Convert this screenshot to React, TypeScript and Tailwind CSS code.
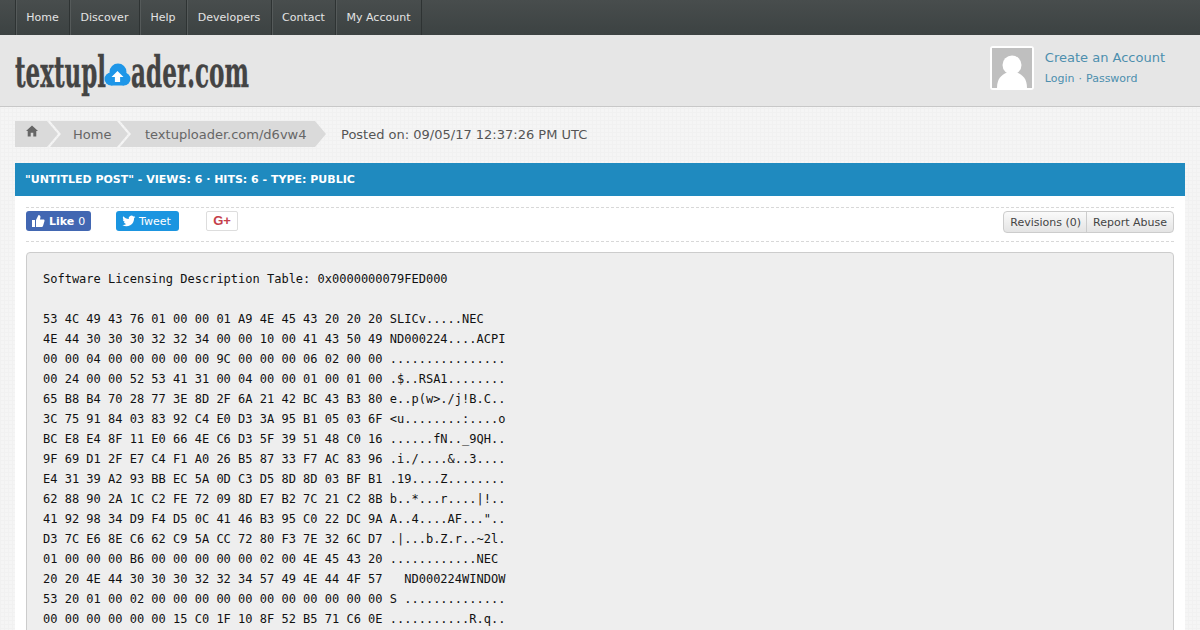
import React from "react";

const nav = [
  ["Home", "w-[54px]"],
  ["Discover", "w-[70px]"],
  ["Help", "w-[47px]"],
  ["Developers", "w-[85px]"],
  ["Contact", "w-[64px]"],
  ["My Account", "w-[86px]"],
];

const lines = [
  "Software Licensing Description Table: 0x0000000079FED000",
  "",
  "53 4C 49 43 76 01 00 00 01 A9 4E 45 43 20 20 20 SLICv.....NEC",
  "4E 44 30 30 30 32 32 34 00 00 10 00 41 43 50 49 ND000224....ACPI",
  "00 00 04 00 00 00 00 00 9C 00 00 00 06 02 00 00 ................",
  "00 24 00 00 52 53 41 31 00 04 00 00 01 00 01 00 .$..RSA1........",
  "65 B8 B4 70 28 77 3E 8D 2F 6A 21 42 BC 43 B3 80 e..p(w>./j!B.C..",
  "3C 75 91 84 03 83 92 C4 E0 D3 3A 95 B1 05 03 6F <u........:....o",
  "BC E8 E4 8F 11 E0 66 4E C6 D3 5F 39 51 48 C0 16 ......fN.._9QH..",
  "9F 69 D1 2F E7 C4 F1 A0 26 B5 87 33 F7 AC 83 96 .i./....&..3....",
  "E4 31 39 A2 93 BB EC 5A 0D C3 D5 8D 8D 03 BF B1 .19....Z........",
  "62 88 90 2A 1C C2 FE 72 09 8D E7 B2 7C 21 C2 8B b..*...r....|!..",
  "41 92 98 34 D9 F4 D5 0C 41 46 B3 95 C0 22 DC 9A A..4....AF...\"..",
  "D3 7C E6 8E C6 62 C9 5A CC 72 80 F3 7E 32 6C D7 .|...b.Z.r..~2l.",
  "01 00 00 00 B6 00 00 00 00 00 02 00 4E 45 43 20 ............NEC",
  "20 20 4E 44 30 30 30 32 32 34 57 49 4E 44 4F 57   ND000224WINDOW",
  "53 20 01 00 02 00 00 00 00 00 00 00 00 00 00 00 S ..............",
  "00 00 00 00 00 00 15 C0 1F 10 8F 52 B5 71 C6 0E ...........R.q..",
];

function Logo() {
  return (
    <svg width="240" height="52" viewBox="0 0 240 52" className="block">
      <text x="0" y="36" textLength="91" lengthAdjust="spacingAndGlyphs" fontFamily="'DejaVu Serif', serif" fontWeight="700" fontSize="42" fill="#444444" stroke="#444444" strokeWidth="0.4">textupl</text>
      <g fill="#1e96e8">
        <circle cx="103" cy="21" r="8.500" />
        <circle cx="96" cy="28" r="6.500" />
        <circle cx="109" cy="28" r="6.500" />
        <rect x="96" y="24" width="13" height="10.500" />
      </g>
      <path d="M102.500 20l6 6h-3.400v5h-5.200v-5h-3.400z" fill="#ffffff" />
      <text x="116" y="36" textLength="118" lengthAdjust="spacingAndGlyphs" fontFamily="'DejaVu Serif', serif" fontWeight="700" fontSize="42" fill="#444444" stroke="#444444" strokeWidth="0.4">ader.com</text>
    </svg>
  );
}

function Avatar() {
  return (
    <div className="w-[44px] h-[44px] bg-white rounded-[3px] p-[2px]">
      <svg viewBox="0 0 40 40" className="w-full h-full block bg-[#bfbfbf]">
        <circle cx="20" cy="17" r="9.500" fill="#fff" />
        <path d="M5 40c0-9 4-13 10-15.500h10c6 2.500 10 6.500 10 15.500z" fill="#fff" />
      </svg>
    </div>
  );
}

export default function App() {
  return (
    <div className="h-[630px] overflow-hidden bg-[#f5f5f5] bg-[linear-gradient(#f1f1f1_1px,transparent_1px),linear-gradient(90deg,#f1f1f1_1px,transparent_1px)] bg-[size:4px_4px] font-['DejaVu_Sans',sans-serif]">
      <nav className="h-[35px] bg-[linear-gradient(#484d4d,#3c4242)] px-[15px] flex">
        <div className="flex border-l border-[#2e3333]">
          {nav.map(([t, w]) => (
            <a key={t} className={`${w} h-[35px] pt-[2px] flex items-center justify-center text-[11px] text-[#e4e4e4] border-r border-[#2e3333] shadow-[inset_1px_0_0_#555a5a]`}>
              {t}
            </a>
          ))}
        </div>
      </nav>

      <header className="h-[72px] bg-[#e6e6e6] border-b border-[#c8c8c8] pl-[15px] pr-[35px] pt-[11px] flex items-start justify-between">
        <div className="mt-[5px]"><Logo /></div>
        <div className="flex items-start gap-[11px]">
          <Avatar />
          <div className="text-[#4d8fae] pt-[3px]">
            <div className="text-[13px] leading-[18px] mb-[4px]">Create an Account</div>
            <div className="text-[11px] leading-[16px] flex gap-[4px]"><span>Login</span><span>·</span><span>Password</span></div>
          </div>
        </div>
      </header>

      <div className="px-[15px] pt-[14px] flex items-start h-[56px]">
        <div className="flex h-[26px] text-[13px] text-[#666666] leading-[28px]">
          <div className="w-[43px] h-[26px] bg-[#dadada] [clip-path:polygon(0_0,32px_0,43px_50%,32px_100%,0_100%)] pl-[11px] pt-[4px]">
            <svg viewBox="0 0 14 13" className="w-[12px] h-[12px] block" fill="#666666">
              <path d="M7 0l7 6.500h-2v6.500H8.500V8.500h-3V13H2V6.500H0z" />
            </svg>
          </div>
          <div className="-ml-[8px] w-[78px] h-[26px] bg-[#dadada] [clip-path:polygon(0_0,67px_0,78px_50%,67px_100%,0_100%,11px_50%)] pl-[23px]">Home</div>
          <div className="-ml-[8px] w-[206px] h-[26px] bg-[#dadada] [clip-path:polygon(0_0,195px_0,206px_50%,195px_100%,0_100%,11px_50%)] pl-[25px]">textuploader.com/d6vw4</div>
        </div>
        <div className="ml-[15px] text-[13px] leading-[28px] text-[#555555]">Posted on: 09/05/17 12:37:26 PM UTC</div>
      </div>

      <section className="mx-[15px] bg-white">
        <div className="h-[33px] bg-[#1f8abf] px-[10px] pt-[2px] text-[11px] font-bold text-white flex items-center">
          "UNTITLED POST" - VIEWS: 6 · HITS: 6 - TYPE: PUBLIC
        </div>
        <div className="px-[11px] pt-[11px]">
          <div className="h-[35px] border-y border-dashed border-[#d8d8d8] flex items-start justify-between pt-[3px]">
            <div className="flex items-center">
              <div className="w-[65px] h-[20px] rounded-[3px] bg-[#4267b2] text-white text-[11px] flex items-center pl-[5px] gap-[4px]">
                <svg viewBox="0 0 14 14" className="w-[14px] h-[14px]" fill="#fff"><path d="M1 6h3v7H1zM5 6l2.500-5c1.200 0 2 .8 2 2l-.5 2.500h3.500c.8 0 1.200.7 1 1.400L12 12c-.2.600-.7 1-1.300 1H5z"/></svg>
                <span className="font-bold pt-[2px]">Like</span><span className="font-normal pt-[2px]">0</span>
              </div>
              <div className="ml-[25px] w-[63px] h-[20px] rounded-[3px] bg-[#1b95e0] text-white text-[11px] flex items-center pl-[6px] gap-[3px]">
                <svg viewBox="0 0 24 24" className="w-[14px] h-[14px]" fill="#fff"><path d="M23 5c-.8.400-1.700.600-2.600.700.900-.600 1.600-1.400 2-2.500-.9.500-1.900.900-2.900 1.100A4.600 4.600 0 0 0 11.600 8.500C7.800 8.300 4.400 6.500 2.100 3.700c-1.200 2.100-.6 4.800 1.400 6.100-.7 0-1.400-.2-2-.6 0 2.200 1.500 4.100 3.700 4.600-.7.200-1.400.2-2.100.1.600 1.800 2.300 3.100 4.300 3.200A9.300 9.300 0 0 1 .6 19a13.100 13.100 0 0 0 20.100-11.600c1-.700 1.700-1.500 2.300-2.400z"/></svg>
                <span className="pt-[2px]">Tweet</span>
              </div>
              <div className="ml-[27px] w-[32px] h-[20px] rounded-[2px] bg-white border border-[#dddddd] text-[#c5404a] text-[13px] font-bold font-['Liberation_Sans',sans-serif] flex items-center justify-center">G+</div>
            </div>
            <div className="flex h-[22px] border border-[#cccccc] rounded-[4px] bg-[linear-gradient(#fafafa,#e4e4e4)] text-[11px] text-[#444444] items-center">
              <span className="pl-[6px] pr-[5px] pt-[2px] border-r border-[#cccccc] h-full flex items-center">Revisions (0)</span>
              <span className="px-[6px] pt-[2px]">Report Abuse</span>
            </div>
          </div>
          <pre className="mt-[10px] bg-[#eeeeee] border border-[#cccccc] rounded-[4px] px-[16px] pt-[16px] pb-[20px] font-['DejaVu_Sans_Mono',monospace] text-[12px] leading-[20px] text-[#111111]">
            {lines.join("\n")}
          </pre>
        </div>
      </section>
    </div>
  );
}
